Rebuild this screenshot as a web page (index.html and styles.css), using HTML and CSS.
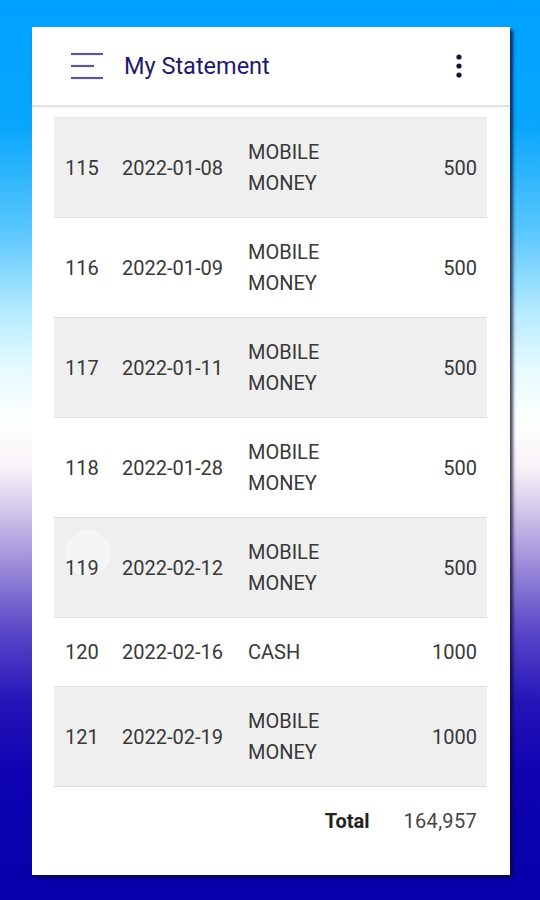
FILE: index.html
```html
<!DOCTYPE html>
<html lang="en">
<head>
  <meta charset="UTF-8">
  <meta name="viewport" content="width=device-width, initial-scale=1.0">
  <title>My Statement</title>
  <link rel="stylesheet" href="styles.css">
</head>
<body>
  <div class="screen">
    <div class="card">
      <header class="app-bar">
        <button class="menu-btn" aria-label="Menu">
          <svg width="34" height="28" viewBox="0 0 34 28">
            <line x1="1" y1="2" x2="33" y2="2" />
            <line x1="1" y1="14" x2="24" y2="14" />
            <line x1="1" y1="26" x2="33" y2="26" />
          </svg>
        </button>
        <h1>My Statement</h1>
        <button class="more-btn" aria-label="More">
          <svg width="8" height="24" viewBox="0 0 8 24">
            <circle cx="4" cy="3" r="2.6" />
            <circle cx="4" cy="12" r="2.6" />
            <circle cx="4" cy="21" r="2.6" />
          </svg>
        </button>
      </header>

      <div class="statement">
        <div class="row shaded">
          <span class="no">115</span><span class="date">2022-01-08</span><span class="type">MOBILE<br>MONEY</span><span class="amount">500</span>
        </div>
        <div class="row">
          <span class="no">116</span><span class="date">2022-01-09</span><span class="type">MOBILE<br>MONEY</span><span class="amount">500</span>
        </div>
        <div class="row shaded">
          <span class="no">117</span><span class="date">2022-01-11</span><span class="type">MOBILE<br>MONEY</span><span class="amount">500</span>
        </div>
        <div class="row">
          <span class="no">118</span><span class="date">2022-01-28</span><span class="type">MOBILE<br>MONEY</span><span class="amount">500</span>
        </div>
        <div class="row shaded">
          <span class="ripple"></span>
          <span class="no">119</span><span class="date">2022-02-12</span><span class="type">MOBILE<br>MONEY</span><span class="amount">500</span>
        </div>
        <div class="row">
          <span class="no">120</span><span class="date">2022-02-16</span><span class="type">CASH</span><span class="amount">1000</span>
        </div>
        <div class="row shaded">
          <span class="no">121</span><span class="date">2022-02-19</span><span class="type">MOBILE<br>MONEY</span><span class="amount">1000</span>
        </div>
        <div class="total">
          <span class="total-label">Total</span>
          <span class="total-value">164,957</span>
        </div>
      </div>
    </div>
  </div>
</body>
</html>
```

FILE: styles.css
```css
body {
  margin: 0;
  font-family: Roboto, 'Noto Sans', sans-serif;
  color: #383838;
}
.screen {
  width: 540px;
  height: 900px;
  padding-top: 27px;
  box-sizing: border-box;
  background: linear-gradient(180deg,
    #00a2ff 0%,
    #08a6fd 14%,
    #5cc8fd 26%,
    #b8ecff 35%,
    #e6faff 41%,
    #ffffff 47%,
    #f8f2f8 52%,
    #cfc4ea 57%,
    #9a8ad8 63%,
    #5a48c8 70%,
    #2614b8 78%,
    #0e02b0 86%,
    #0800aa 100%);
}
.card {
  margin-left: 32px;
  width: 478px;
  height: 848px;
  background: #ffffff;
  box-shadow: 3px 3px 3px rgba(10, 10, 50, 0.75);
}
/* Top app bar */
.app-bar {
  height: 78px;
  display: flex;
  align-items: center;
  border-bottom: 2px solid #e2e2e2;
  box-shadow: 0 1px 2px rgba(0, 0, 0, 0.06);
}
.app-bar button {
  background: none;
  border: none;
  padding: 0;
  display: flex;
}
.menu-btn {
  margin-left: 38px;
}
.menu-btn line {
  stroke: #5b5895;
  stroke-width: 2.2;
}
.app-bar h1 {
  margin: 0 0 0 20px;
  font-size: 23.5px;
  font-weight: 400;
  color: #1d1a6c;
  flex: 1;
}
.more-btn {
  margin-right: 47px;
}
.more-btn circle {
  fill: #141438;
}
/* Statement table */
.statement {
  margin: 10px 23px 0 22px;
  border-top: 1px solid #e3e3e3;
}
.row {
  position: relative;
  display: grid;
  grid-template-columns: 57px 126px 1fr auto;
  align-items: center;
  padding: 19px 10px 18px 11px;
  font-size: 20px;
  line-height: 31px;
  border-bottom: 1px solid #dedede;
  overflow: hidden;
}
.row.shaded {
  background: #efefef;
}
.row span {
  position: relative;
}
.amount {
  text-align: right;
}
.row .ripple {
  position: absolute;
  left: 11px;
  top: 12px;
  width: 46px;
  height: 46px;
  border-radius: 50%;
  background: rgba(255, 255, 255, 0.4);
}
.total {
  display: flex;
  justify-content: flex-end;
  gap: 34px;
  padding: 19px 10px 0 0;
  font-size: 20px;
  line-height: 31px;
}
.total-label {
  font-weight: 700;
  color: #222222;
}
.total-value {
  color: #444444;
  letter-spacing: 0.3px;
}
```
